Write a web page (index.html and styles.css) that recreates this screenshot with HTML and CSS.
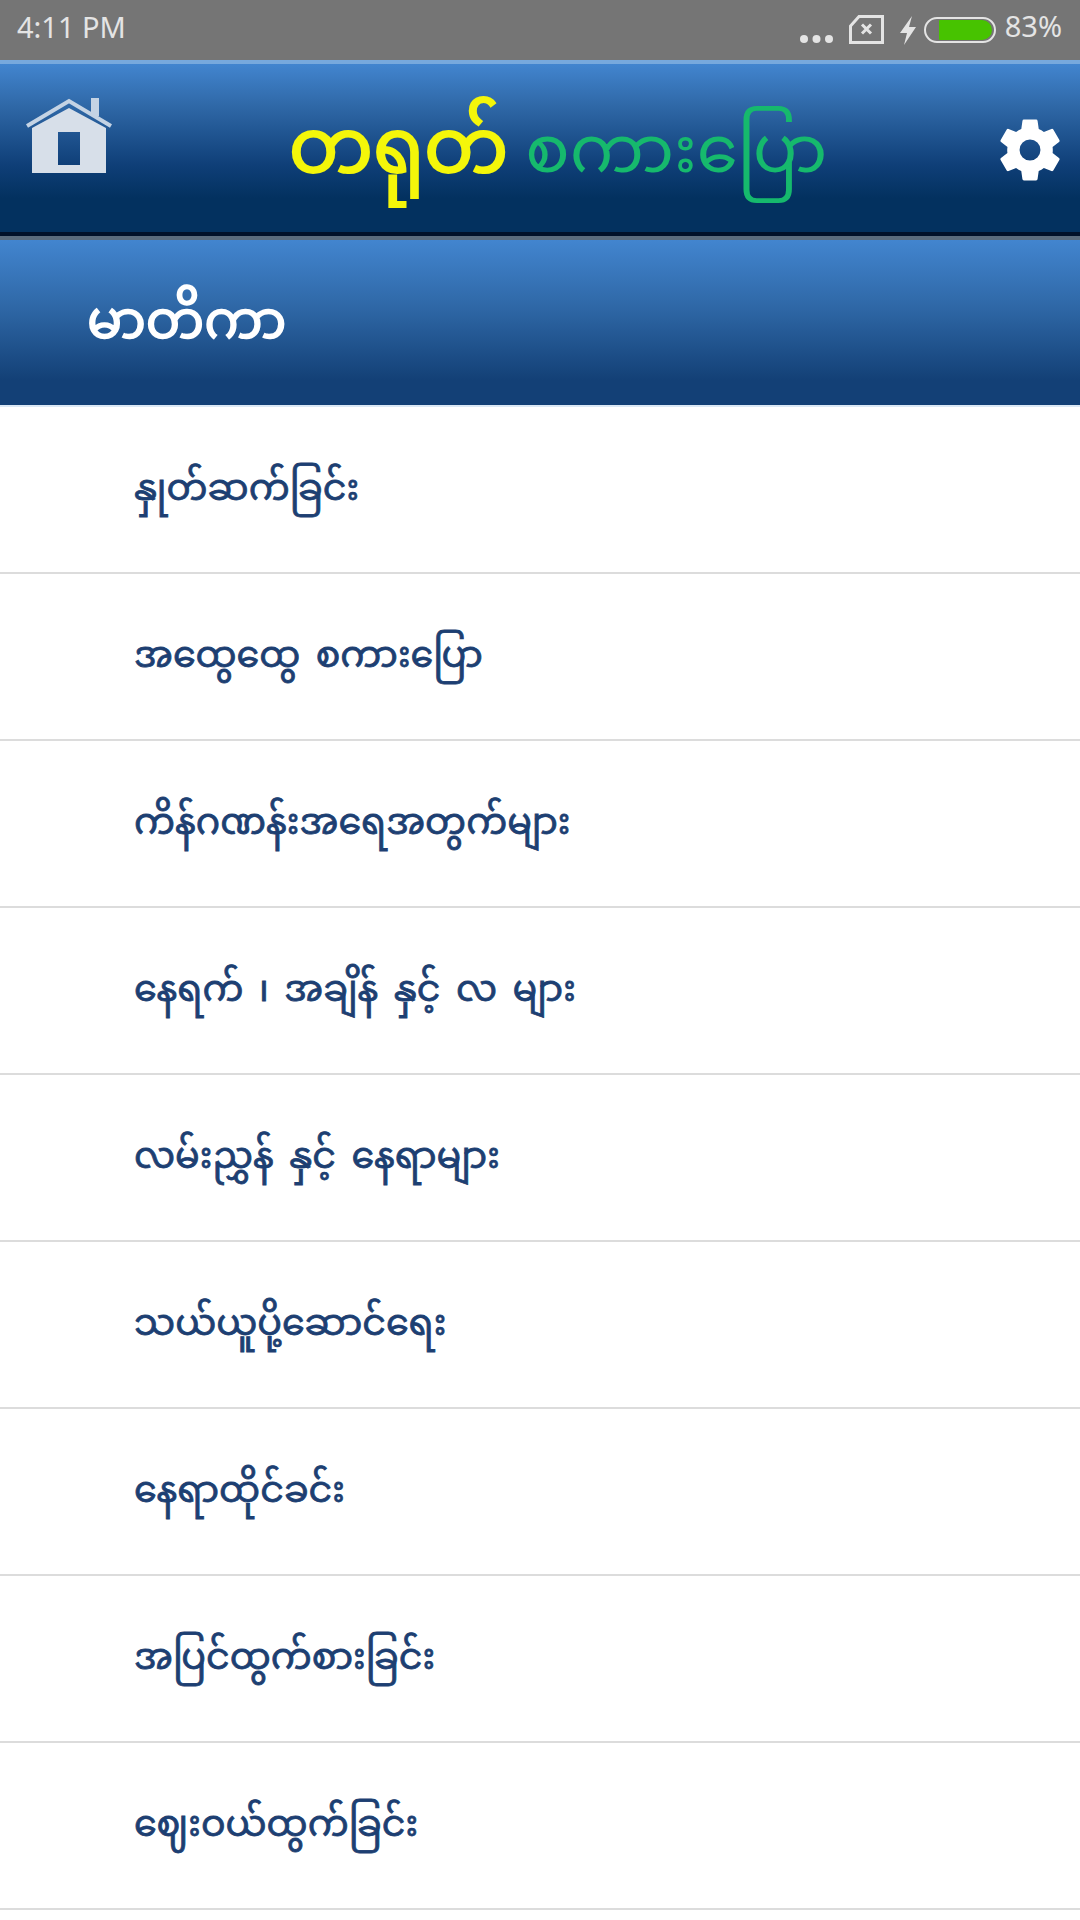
FILE: index.html
```html
<!DOCTYPE html>
<html>
<head>
    <meta charset="UTF-8">
    <meta name="viewport" content="width=device-width, initial-scale=1.0">
    <title>Menu</title>
    <link rel="stylesheet" href="styles.css">
</head>
<body>

<div class="status-bar">
    <span class="time">4:11 PM</span>
    <div class="status-icons">
        <svg class="dots" width="33" height="8" viewBox="0 0 33 8"><circle cx="4" cy="4" r="4"/><circle cx="16.5" cy="4" r="4"/><circle cx="29" cy="4" r="4"/></svg>
        <svg class="sim" width="35" height="29" viewBox="0 0 35 29"><path d="M10 1.5H33.5V27.5H1.5V11Z"/><path d="M13 9.5l9 9M22 9.5l-9 9"/></svg>
        <svg class="bolt" width="16" height="29" viewBox="0 0 16 29"><path d="M12 0L0 17H7L4 29L16 11H9Z"/></svg>
        <div class="battery"><div class="battery-fill"></div></div>
        <span class="percent">83%</span>
    </div>
</div>

<header class="nav-bar">
    <svg class="home-icon" width="86" height="76" viewBox="0 0 86 76">
        <path class="home-roof" d="M1 28L43 3L85 28"/>
        <rect class="home-chimney" x="65" y="0" width="8" height="18"/>
        <path class="home-body" d="M6 30L43 10L80 30V75H6ZM32 34V67H54V34Z"/>
    </svg>
    <div class="logo"><span class="logo-main">တရုတ်</span><span class="logo-sub">စကားပြော</span></div>
    <svg class="gear-icon" width="76" height="76" viewBox="0 0 24 24"><path d="M19.14 12.94c.04-.3.06-.61.06-.94s-.02-.64-.07-.94l2.03-1.58a.49.49 0 0 0 .12-.61l-1.92-3.32a.49.49 0 0 0-.59-.22l-2.39.96a7 7 0 0 0-1.62-.94l-.36-2.54a.48.48 0 0 0-.48-.41h-3.84a.48.48 0 0 0-.47.41l-.36 2.54c-.59.24-1.13.57-1.62.94l-2.39-.96a.49.49 0 0 0-.59.22L2.74 8.87a.48.48 0 0 0 .12.61l2.03 1.58c-.05.3-.09.63-.09.94s.02.64.07.94l-2.03 1.58a.49.49 0 0 0-.12.61l1.92 3.32c.12.22.37.29.59.22l2.39-.96c.5.38 1.03.7 1.62.94l.36 2.54c.05.24.24.41.48.41h3.84c.24 0 .44-.17.47-.41l.36-2.54c.59-.24 1.13-.56 1.62-.94l2.39.96c.22.08.47 0 .59-.22l1.92-3.32a.48.48 0 0 0-.12-.61zM12 15.3a3.3 3.3 0 1 1 0-6.6 3.3 3.3 0 0 1 0 6.6z"/></svg>
</header>

<div class="title-bar">မာတိကာ</div>

<ul class="menu-list">
    <li>နှုတ်ဆက်ခြင်း</li>
    <li>အထွေထွေ စကားပြော</li>
    <li>ကိန်ဂဏန်းအရေအတွက်များ</li>
    <li>နေရက် ၊ အချိန် နှင့် လ များ</li>
    <li>လမ်းညွှန် နှင့် နေရာများ</li>
    <li>သယ်ယူပို့ဆောင်ရေး</li>
    <li>နေရာထိုင်ခင်း</li>
    <li>အပြင်ထွက်စားခြင်း</li>
    <li>ဈေးဝယ်ထွက်ခြင်း</li>
</ul>

</body>
</html>
```

FILE: styles.css
```css
html, body {
    height: 1920px;
    overflow: hidden;
}
body {
    margin: 0;
    background: #fff;
    font-family: "Noto Sans Myanmar", "Padauk", "Myanmar Text", "Noto Sans", "DejaVu Sans", sans-serif;
}
.status-bar {
    height: 60px;
    background: #757575;
    color: #e4e4e4;
    display: flex;
    justify-content: space-between;
    padding: 0 18px 0 17px;
    font-family: "Noto Sans", sans-serif;
    font-size: 29px;
}
.time {
    line-height: 54px;
}
.status-icons {
    display: flex;
    align-items: flex-start;
}
.dots {
    fill: #e4e4e4;
    margin: 35px 16px 0 0;
}
.sim {
    fill: none;
    stroke: #e4e4e4;
    stroke-width: 3;
    margin: 15px 16px 0 0;
}
.bolt {
    fill: #e4e4e4;
    margin: 16px 8px 0 0;
}
.battery {
    width: 72px;
    height: 26px;
    border: 2px solid #e4e4e4;
    border-radius: 15px;
    margin: 17px 9px 0 0;
    padding: 1px 2px 1px 13px;
    box-sizing: border-box;
}
.battery-fill {
    height: 100%;
    background: #47c300;
    border-radius: 1px 10px 10px 1px;
}
.percent {
    line-height: 52px;
}
.nav-bar {
    height: 176px;
    box-sizing: border-box;
    border-top: 4px solid #77a9dd;
    border-bottom: 4px solid #01112a;
    background: linear-gradient(#4285cf 0%, #2f68a7 25%, #0f3f78 60%, #03315f 80%, #03315f 100%);
    display: flex;
    align-items: center;
    justify-content: space-between;
    padding: 0 12px 0 26px;
}
.home-icon {
    align-self: flex-start;
    margin-top: 34px;
}
.home-roof {
    fill: none;
    stroke: #c4d3e4;
    stroke-width: 4;
}
.home-chimney {
    fill: #c4d3e4;
}
.home-body {
    fill: #d7dfe9;
    fill-rule: evenodd;
}
.logo {
    display: flex;
    align-items: baseline;
    gap: 17px;
    margin: 14px 0 0 12px;
    white-space: nowrap;
}
.logo-main {
    color: #f4f60a;
    font-size: 75px;
    -webkit-text-stroke: 2px #f4f60a;
}
.logo-sub {
    color: #16b96d;
    font-size: 66px;
}
.gear-icon {
    fill: #fff;
    margin-top: 4px;
}
.title-bar {
    height: 169px;
    border-top: 4px solid #5a6b7d;
    box-sizing: border-box;
    background: linear-gradient(#4285cf, #2f68a7 40%, #134076 85%, #134076);
    color: #fff;
    font-size: 52px;
    -webkit-text-stroke: 1.5px #fff;
    display: flex;
    align-items: center;
    padding: 6px 0 0 87px;
}
.menu-list {
    list-style: none;
    margin: 0;
    padding: 0;
    border-top: 2px solid #dbe8f5;
}
.menu-list li {
    height: 167px;
    box-sizing: border-box;
    border-bottom: 2px solid #dcdcdc;
    color: #1d3f72;
    font-size: 36.5px;
    -webkit-text-stroke: 0.8px #1d3f72;
    word-spacing: 6px;
    display: flex;
    align-items: center;
    padding: 4px 0 0 134px;
}
```
